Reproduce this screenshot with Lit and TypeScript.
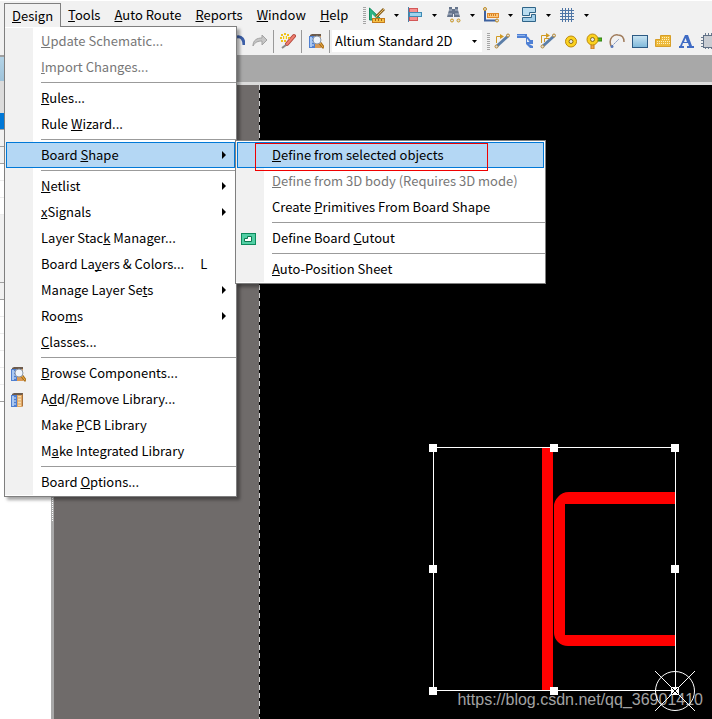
import { LitElement, html, svg, css, nothing, TemplateResult } from "lit";
import { customElement, property } from "lit/decorators.js";
import { classMap } from "lit/directives/class-map.js";

interface Item {
  label?: string; // "&" marks the access key
  key?: string;
  icon?: string;
  disabled?: boolean;
  active?: boolean;
  marked?: boolean;
  more?: boolean;
  children?: Item[];
}

const books = svg`
  <path d="M2 2l2-1h9v2H2z" fill="#6b5a4c"/>
  <rect x="1" y="3" width="6" height="12" fill="#4f7fd0"/>
  <rect x="2" y="4" width="2" height="10" fill="#a9c8f2"/>
  <path d="M4 6h2M4 9h2M4 12h2" stroke="#dfeafa"/>`;

const icons: Record<string, TemplateResult> = {
  browse: svg`${books}
    <rect x="7" y="3" width="6" height="12" fill="#d99a55"/>
    <path d="M12 10l3 4" stroke="#a86d1c" stroke-width="3" stroke-linecap="round"/>
    <path d="M12 10l3 4" stroke="#f0b64a" stroke-linecap="round"/>
    <circle cx="9" cy="7" r="4" fill="#eef4fb" stroke="#8c98a8"/>`,
  library: svg`${books}
    <path d="M13 1v13l-1 1V3z" fill="#a8713c"/>
    <rect x="7" y="3" width="5" height="12" fill="#e0a663"/>
    <rect x="8" y="4" width="3" height="10" fill="#f8dcae"/>
    <path d="M8 6h3M8 9h3M8 12h3" stroke="#d9a25e"/>`,
  cutout: svg`
    <rect x="0.5" y="2.5" width="14" height="11" fill="#52cfa5" stroke="#0c8a5c"/>
    <path d="M3.500 10.500v-3h3v-2h4v5z" fill="#fff" stroke="#0c7a50"/>`,
  square: svg`
    <path d="M0.500 1v12H13z" fill="#2cb585" stroke="#128a5e"/>
    <path d="M3 7v4h4z" fill="#f0f0f0"/>
    <path d="M15 2L7 10" stroke="#8a6322" stroke-width="3"/>
    <path d="M15 2L7 10" stroke="#e3ba6a"/>
    <rect x="3.500" y="11.500" width="12" height="4" fill="#f5c044" stroke="#c47b1d"/>
    <path d="M6.500 12v2M9.500 12v2M12.500 12v2" stroke="#a5651a"/>`,
  align: svg`
    <rect x="2.500" y="1.500" width="8" height="4" fill="#f58f8f" stroke="#d35757"/>
    <rect x="2.500" y="9.500" width="8" height="4" fill="#f58f8f" stroke="#d35757"/>
    <rect x="2.500" y="5.500" width="12" height="4" fill="#9fd4ee" stroke="#3f8bb4"/>
    <path d="M1.500 0v15" stroke="#4d7fa6"/>`,
  find: svg`
    <path d="M4 0h3v2h3V0h3v3l2 7H9V7H8v3H2l2-7z" fill="#66758c"/>
    <path d="M4 3h3M10 3h3M3 7h4M10 7h4" stroke="#b8c3d1"/>
    <circle cx="7" cy="13.500" r="1.500" fill="#ddd" stroke="#c9951f"/>
    <circle cx="13.500" cy="13.500" r="1.500" fill="#ddd" stroke="#c9951f"/>`,
  measure: svg`
    <path d="M2 2v11.500H14" fill="none" stroke="#3e62a0" stroke-width="2"/>
    <rect x="4.500" y="6.500" width="11" height="4" fill="#fbc77c" stroke="#e08a2c"/>
    <path d="M6.500 7v2M8.500 7v2M10.500 7v2M12.500 7v2" stroke="#d9801f"/>
    <circle cx="2" cy="2" r="1.500" fill="#ddd" stroke="#c08a1d"/>
    <circle cx="14" cy="13.500" r="1.500" fill="#ddd" stroke="#c08a1d"/>`,
  room: svg`
    <path d="M1.500 0.500h13v5h-6v3h-7z" fill="#b9dcef" stroke="#2f6488"/>
    <path d="M14.500 7.500v7h-13v-4h9v-3z" fill="#a2cee8" stroke="#2f6488"/>`,
  grid: svg`
    <path d="M3.500 1v14M6.500 1v14M9.500 1v14M12.500 1v14M1 3.500h14M1 6.500h14M1 9.500h14M1 12.500h14" stroke="#4f76a6"/>`,
  undo: svg`<path d="M8 4c5-1 7 3 7 8" fill="none" stroke="#3c5fa8" stroke-width="3"/>`,
  redo: svg`<path d="M1 13c0-6 4-8 9-8V2l5 5-5 5V8C6 8 3 9 1 13z" fill="#c6c6c6" stroke="#a2a2a2"/>`,
  brush: svg`
    <path d="M14 3L7 11" stroke="#b5483c" stroke-width="4" stroke-linecap="round"/>
    <path d="M14 3L7 11" stroke="#ee7f70" stroke-width="2" stroke-linecap="round"/>
    <path d="M6 12l-4 3" stroke="#888" stroke-width="2"/>
    <path d="M1 1h2v2H1zM4 0h2v2H4zM7 1h2v2H7zM0 4h2v2H0zM8 4h2v2H8zM1 7h2v2H1zM4 7h2v2H4zM3 3h4v3H3z" fill="#efc11c"/>
    <rect x="4" y="3" width="2" height="3" fill="#fff3a0"/>`,
  route: svg`
    <path d="M2.500 10V3.500H7" fill="none" stroke="#d09a22"/>
    <path d="M6 1l4 2.500L6 6z" fill="#d09a22"/>
    <path d="M3 13L14 3" stroke="#5b7ea8" stroke-width="3"/>
    <circle cx="2.500" cy="13.500" r="1.500" fill="#ddd" stroke="#b58732"/>
    <circle cx="14" cy="2.500" r="1.500" fill="#ddd" stroke="#b58732"/>`,
  diff: svg`
    <path d="M0 1h10v8l6 0v2h-4l4 2v2h-3l-4-4V5H0z" fill="#4f80d4"/>
    <path d="M10 4l3 4h3" fill="none" stroke="#4f80d4" stroke-width="2"/>
    <path d="M0 2.500h8" stroke="#8eb2ec"/>`,
  multi: svg`
    <path d="M1.500 10V2.500H8M4.500 9V5.500H9" fill="none" stroke="#d09a22"/>
    <path d="M6 0l4 2.500L6 5z" fill="#d09a22"/>
    <path d="M3 13L14 3" stroke="#5b7ea8" stroke-width="3"/>
    <circle cx="2.500" cy="13.500" r="1.500" fill="#ddd" stroke="#b58732"/>
    <circle cx="14" cy="2.500" r="1.500" fill="#ddd" stroke="#b58732"/>`,
  pad: svg`
    <circle cx="8" cy="8.500" r="5.500" fill="#fbd21f" stroke="#bd8a0c"/>
    <circle cx="8" cy="8.500" r="2" fill="#e8e8e8" stroke="#8a6a14"/>`,
  via: svg`
    <rect x="10" y="5" width="6" height="3" fill="#55b51c" stroke="#2f7f10"/>
    <rect x="5" y="11" width="3" height="5" fill="#f3a846" stroke="#c67a1d"/>
    <circle cx="6.500" cy="6.500" r="5.500" fill="#fbd21f" stroke="#bd8a0c"/>
    <circle cx="6.500" cy="6.500" r="2" fill="#e8e8e8" stroke="#8a6a14"/>`,
  arc: svg`
    <path d="M2 13C-1 5 5 1 9 2c4 0 6 3 6 7" fill="none" stroke="#a07c5c" stroke-width="1.500"/>
    <path d="M3 13l7-7" stroke="#7288b8" stroke-dasharray="2 1"/>
    <circle cx="3" cy="13.500" r="1.500" fill="#5878b8"/>`,
  fill: svg`
    <defs><linearGradient id="sky" x2="0" y2="1"><stop stop-color="#cbe5f3"/><stop offset="1" stop-color="#7db8da"/></linearGradient></defs>
    <rect x="0.500" y="2.500" width="15" height="12" fill="url(#sky)" stroke="#2c5b85"/>`,
  polygon: svg`
    <path d="M0.500 13.500v-7h5v-4h10v11z" fill="#edb93a" stroke="#d79f28"/>
    <path d="M2 8.500h13M2 10.500h13M7 4.500h8M7 6.500h8" stroke="#fff1bf" stroke-dasharray="1 1"/>`,
  string: svg`
    <path d="M7 2h3l4 11h2v2H9v-2h2l-1-3H5l-1 3h2v2H1v-2h1zM7.500 5L6 9h3z" fill="#3f6bc4" fill-rule="evenodd"/>`,
  chip: svg`
    <path d="M4.500 0v16M7.500 0v16M10.500 0v16M13.500 0v16M0 4.500h16M0 7.500h16M0 10.500h16M0 13.500h16" stroke="#6b7b90"/>
    <rect x="2.500" y="2.500" width="13" height="12" fill="#c8ccd2" stroke="#5f6f84"/>`,
};

const icon = (name: string) =>
  html`<svg class="icon" viewBox="0 0 16 16" width="16" height="16" aria-hidden="true">${icons[name]}</svg>`;

const caret = html`<svg class="caret" viewBox="0 0 5 3" width="5" height="3" aria-hidden="true"><path d="M0 0h5L2.500 3z" /></svg>`;

const accessKey = (label: string) => {
  const at = label.search(/&\S/);
  if (at < 0) return label;
  return html`${label.slice(0, at)}<u>${label[at + 1]}</u>${label.slice(at + 2)}`;
};

const ui = css`
  button, select {
    font: inherit;
    color: inherit;
    border: 0;
    margin: 0;
    padding: 0;
    background: none;
  }
  u {
    text-decoration-thickness: 1px;
    text-underline-offset: 1px;
    text-decoration-skip-ink: none;
  }
  .icon { display: block; flex: none; }
  .caret { display: block; flex: none; }
`;

const SEP: Item = {};

const designMenu: Item[] = [
  { label: "&Update Schematic...", disabled: true },
  { label: "&Import Changes...", disabled: true },
  SEP,
  { label: "&Rules..." },
  { label: "Rule &Wizard..." },
  SEP,
  {
    label: "Board &Shape",
    active: true,
    more: true,
    children: [
      { label: "&Define from selected objects", active: true, marked: true },
      { label: "&Define from 3D body (Requires 3D mode)", disabled: true },
      { label: "Create &Primitives From Board Shape" },
      SEP,
      { label: "Define Board &Cutout", icon: "cutout" },
      SEP,
      { label: "&Auto-Position Sheet" },
    ],
  },
  SEP,
  { label: "&Netlist", more: true },
  { label: "&xSignals", more: true },
  { label: "Layer Stac&k Manager..." },
  { label: "Board La&yers & Colors...", key: "L" },
  { label: "Manage Layer Se&ts", more: true },
  { label: "Roo&ms", more: true },
  { label: "&Classes..." },
  SEP,
  { label: "&Browse Components...", icon: "browse" },
  { label: "A&dd/Remove Library...", icon: "library" },
  { label: "Make &PCB Library" },
  { label: "M&ake Integrated Library" },
  SEP,
  { label: "Board &Options..." },
];

@customElement("drop-menu")
class DropMenu extends LitElement {
  @property({ attribute: false }) items: Item[] = [];

  static styles = [
    ui,
    css`
      :host {
        display: block;
        box-sizing: border-box;
        padding: 1px 0;
        border: 1px solid #7f7f7f;
        background: #fff;
        color: #000;
        box-shadow: 3px 3px 3px rgba(0, 0, 0, 0.35);
      }
      .list {
        margin: 0;
        padding: 0;
        list-style: none;
        background: linear-gradient(#f1f1f1, #f1f1f1) 0 0 / 28px 100% no-repeat;
      }
      .row { position: relative; }
      .sep {
        height: 1px;
        margin: 0 0 0 36px;
        padding: 0;
        border: solid transparent;
        border-width: 2px 0;
        background: #9b9b9b content-box;
      }
      .item {
        display: flex;
        align-items: center;
        width: calc(100% - 2px);
        height: 26px;
        margin: 0 1px;
        padding: 0 8px 0 3px;
        border: 1px solid transparent;
        text-align: left;
        white-space: nowrap;
      }
      .item:disabled { color: #777; }
      .item.active { background: #b4d7f4; border-color: #0078d7; }
      .slot { width: 31px; flex: none; padding-top: 2px; }
      .key { margin-left: 16px; }
      .arrow { margin-left: auto; }
      .sub {
        position: absolute;
        top: -2px;
        left: calc(100% - 1px);
        width: 311px;
        z-index: 2;
      }
      .mark {
        position: absolute;
        top: 1px;
        left: 19px;
        width: 231px;
        height: 26px;
        border: 1px solid #f00000;
        z-index: 1;
        pointer-events: none;
      }
    `,
  ];

  private row(it: Item) {
    if (!it.label) return html`<li class="sep" role="separator"></li>`;
    return html`<li class="row" role="none">
      <button class=${classMap({ item: true, active: !!it.active })} role="menuitem" ?disabled=${it.disabled}>
        <span class="slot">${it.icon ? icon(it.icon) : nothing}</span>
        <span>${accessKey(it.label)}</span>
        ${it.key ? html`<span class="key">${it.key}</span>` : nothing}
        ${it.more
          ? html`<svg class="arrow" viewBox="0 0 4 8" width="4" height="8" aria-hidden="true"><path d="M0 0v8l4-4z" /></svg>`
          : nothing}
      </button>
      ${it.marked ? html`<span class="mark"></span>` : nothing}
      ${it.children ? html`<drop-menu class="sub" .items=${it.children}></drop-menu>` : nothing}
    </li>`;
  }

  render() {
    return html`<ul class="list" role="menu">${this.items.map((it) => this.row(it))}</ul>`;
  }
}

@customElement("pcb-canvas")
class PcbCanvas extends LitElement {
  static styles = css`
    :host {
      position: relative;
      display: grid;
      grid-template-columns: 205px 1fr;
      background: #6f6b6a;
      overflow: hidden;
    }
    .sheet {
      grid-column: 2;
      background:
        repeating-linear-gradient(#d0d0d0 0 5px, #000 5px 8px) 0 0 / 1px 100% no-repeat,
        #000;
    }
    .board {
      position: absolute;
      left: 374px;
      top: 358px;
      width: 274px;
      height: 274px;
    }
    .watermark {
      position: absolute;
      right: 9px;
      bottom: 10px;
      font: 16px/18px "Liberation Sans", sans-serif;
      color: #a3a3a3;
    }
  `;

  render() {
    const handles = [
      [5, 5], [126, 5], [247, 5], [5, 126], [247, 126], [5, 248], [126, 248],
    ];
    return html`
      <div class="sheet"></div>
      <span class="watermark">https://blog.csdn.net/qq_36901410</span>
      <svg class="board" viewBox="0 0 274 274" aria-label="Board outline">
        <path d="M119.500 5v243" stroke="#f00" stroke-width="11" />
        <path d="M247 49H141Q134 49 130 54Q126 58 126 63V190Q126 195 130 199Q134 203 140 203H247V192H137V61H247z" fill="#f00" />
        <rect x="5.500" y="4.500" width="242" height="243" fill="none" stroke="#fff" />
        ${handles.map(([x, y]) => svg`<rect x=${x - 4} y=${y - 4} width="8" height="8" fill="#fff"/>`)}
        <rect x="243" y="244" width="8" height="8" fill="#fff" />
        <path d="M244 245l6 6M250 245l-6 6" stroke="#000" />
        <circle cx="247" cy="248" r="19.500" fill="none" stroke="#fff" />
        <path d="M227 228l16 16M267 228l-16 16M227 268l16-16M267 268l-16-16" stroke="#fff" />
      </svg>
    `;
  }
}

@customElement("app-root")
class AppRoot extends LitElement {
  static styles = [
    ui,
    css`
      :host {
        display: flex;
        flex-direction: column;
        min-height: 100vh;
        overflow: hidden;
        background: #f1f1f1;
        color: #000;
        font: 13px/20px "Noto Sans CJK SC", "Noto Sans", sans-serif;
      }
      .menubar {
        display: flex;
        align-items: center;
        height: 24px;
        padding: 2px 0 2px 4px;
        border-top: 1px solid #fff;
        white-space: nowrap;
      }
      .entry { position: relative; }
      .top { height: 24px; padding: 0 7px; display: block; }
      .open .top {
        position: relative;
        z-index: 4;
        padding: 0 7px;
        border: solid #7f7f7f;
        border-width: 1px 1px 0;
        background: #f1f1f1;
        line-height: 18px;
      }
      .drop {
        position: absolute;
        z-index: 3;
        left: 0;
        top: 23px;
        width: 233px;
      }
      .grip {
        flex: none;
        width: 3px;
        height: 17px;
        background: repeating-linear-gradient(#a5a5a5 0 1px, transparent 1px 2px);
      }
      .menubar .grip { margin: 0 3px 0 8px; }
      .split { display: flex; align-items: center; gap: 9px; width: 38px; height: 24px; }
      .toolbar {
        box-sizing: border-box;
        display: flex;
        align-items: center;
        height: 26px;
        padding: 0 0 2px 225px;
      }
      .tool {
        flex: none;
        display: flex;
        align-items: center;
        justify-content: center;
        width: 23px;
        height: 24px;
      }
      .rule { flex: none; width: 1px; height: 23px; margin: 0 2px; background: #999; }
      .combo { display: grid; align-items: center; flex: none; width: 150px; margin-right: 5px; }
      .style {
        grid-area: 1 / 1;
        appearance: none;
        height: 22px;
        padding: 0 16px 0 3px;
        background: #fff;
        border-radius: 0;
      }
      .combo .caret { grid-area: 1 / 1; justify-self: end; margin-right: 5px; pointer-events: none; }
      .body {
        flex: 1;
        display: grid;
        grid-template-columns: 51px 3px 1fr;
        background: #a8a8a8;
      }
      .panel { background: #fff; }
      .strip { box-sizing: border-box; height: 17px; border-bottom: 1px solid #a0a0a0; background: #f1f1f1; }
      .strip.edge { height: 2px; background: #a0a0a0; }
      .strip.title { height: 24px; border: 0; background: linear-gradient(#b3d3e6, #9fc3da); }
      .strip.tall { height: 32px; border: 0; background: #dcdcdc; }
      .strip.chosen { background: #0078d7; }
      .strip.cell { background: #fff; border-color: #ececec; }
      .strip.blank { height: 68px; }
      .strip.last { background: #fff; }
      .splitter { display: grid; align-items: center; justify-content: center; }
      .dots { width: 1px; height: 270px; background: repeating-linear-gradient(#fff 0 1px, #a8a8a8 1px 2px); }
      .work { display: grid; grid-template-rows: 27px 1fr; min-width: 0; }
      .view { border-top: 3px solid #dcdcdc; }
    `,
  ];

  private menus = ["&Design", "&Tools", "&Auto Route", "&Reports", "&Window", "&Help"];
  private splits = ["square", "align", "find", "measure", "room", "grid"];
  private places = ["route", "diff", "multi", "pad", "via", "arc", "fill", "polygon", "string", "chip"];
  private strips = [
    "edge", "title", "tall", "chosen", "", "", "cell", "cell", "cell",
    "blank", "", "cell", "cell", "cell", "cell", "cell", "last",
  ];

  private tool = (name: string) => html`<button class="tool" aria-label=${name}>${icon(name)}</button>`;

  render() {
    return html`
      <nav class="menubar" role="menubar">
        ${this.menus.map(
          (m, i) => html`<div class=${classMap({ entry: true, open: i === 0 })}>
            <button class="top" role="menuitem">${accessKey(m)}</button>
            ${i === 0 ? html`<drop-menu class="drop" .items=${designMenu}></drop-menu>` : nothing}
          </div>`
        )}
        <span class="grip"></span>
        ${this.splits.map((s) => html`<button class="split" aria-label=${s}>${icon(s)}${caret}</button>`)}
      </nav>
      <div class="toolbar" role="toolbar">
        ${this.tool("undo")}${this.tool("redo")}
        <span class="rule"></span>${this.tool("brush")}
        <span class="rule"></span>${this.tool("browse")}
        <span class="rule"></span>
        <div class="combo">
          <select class="style" aria-label="View configuration">
            <option>Altium Standard 2D</option>
          </select>
          ${caret}
        </div>
        <span class="grip"></span>
        ${this.places.map(this.tool)}
      </div>
      <main class="body">
        <aside class="panel">${this.strips.map((s) => html`<div class="strip ${s}"></div>`)}</aside>
        <div class="splitter"><span class="dots"></span></div>
        <section class="work">
          <div></div>
          <pcb-canvas class="view"></pcb-canvas>
        </section>
      </main>
    `;
  }
}
